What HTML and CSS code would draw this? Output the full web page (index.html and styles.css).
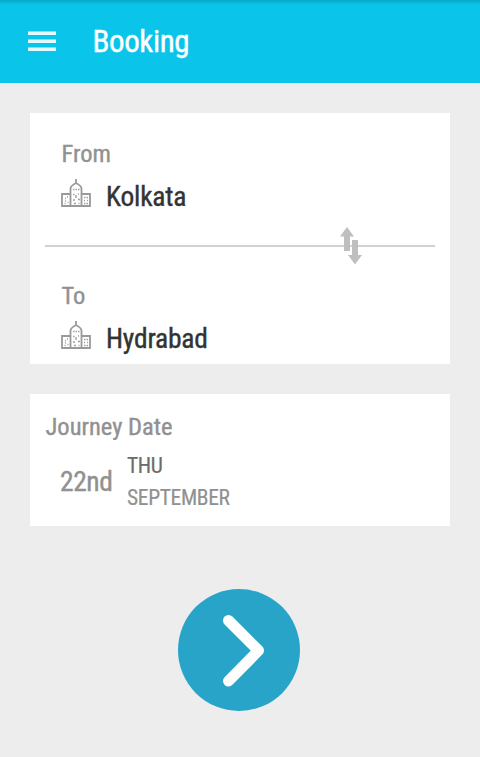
FILE: index.html
```html
<!DOCTYPE html>
<html lang="en">
<head>
    <meta charset="UTF-8">
    <meta name="viewport" content="width=device-width, initial-scale=1.0">
    <title>Booking</title>
    <link rel="stylesheet" href="styles.css">
</head>

<body>
    <!-- building icon, used in both places -->
    <svg class="symbols">
        <symbol id="city" viewBox="0 0 30 28">
            <path class="outline" d="M9.500 27V9.500Q10 6.500 15 4Q20 6.500 20.500 9.500V27M15 0V4M9.500 15H1V27H29V15H20.500"/>
            <path class="windows" d="M12 10.500h1.500M14.500 10.500h1.500M17 10.500h1.500M15 16v3M12 15.500h1.500M17 15h1M12 21h2M17 20.500h2M13 24.500h2M17.500 24.500h1M4 19.500h1M6 18h1M4 22h1M3.500 24.500h1M6.500 23.500h1M23 18.500h1.500M25.500 18.500h1.500M23 21.500h1M26 21.500h1M23 24.500h1.500M25.500 24.500h1.500"/>
        </symbol>
    </svg>

    <header class="topbar">
        <button class="menu" aria-label="Menu">
            <span></span>
            <span></span>
            <span></span>
        </button>
        <h1 class="title">Booking</h1>
    </header>

    <main class="content">
        <section class="card route">
            <div class="place">
                <span class="label">From</span>
                <div class="city">
                    <svg class="city-icon"><use href="#city"/></svg>
                    <span class="city-name">Kolkata</span>
                </div>
            </div>
            <div class="divider">
                <svg class="swap" viewBox="0 0 24 38">
                    <path d="M7 0L14 9.500H10V24H4V9.500H0ZM12 13H18V28H22L15 37.500L8 28H12Z"/>
                </svg>
            </div>
            <div class="place">
                <span class="label">To</span>
                <div class="city">
                    <svg class="city-icon"><use href="#city"/></svg>
                    <span class="city-name">Hydrabad</span>
                </div>
            </div>
        </section>

        <section class="card journey">
            <span class="label">Journey Date</span>
            <div class="date">
                <span class="day">22nd</span>
                <div class="rest">
                    <span class="weekday">THU</span>
                    <span class="month">SEPTEMBER</span>
                </div>
            </div>
        </section>

        <button class="next" aria-label="Next">
            <svg viewBox="0 0 122 122">
                <path d="M50.500 31.500L80.500 61.500L50.500 92"/>
            </svg>
        </button>
    </main>
</body>

</html>
```

FILE: styles.css
```css
* {
    box-sizing: border-box;
}

body {
    margin: 0;
    min-height: 757px;
    background-color: #ededed;
    font-family: "Roboto Condensed", Roboto, sans-serif;
    font-stretch: 75%;
    color: #919191;
}

button {
    border: none;
    padding: 0;
}

.symbols {
    display: none;
}

.topbar {
    display: flex;
    align-items: center;
    height: 83px;
    padding: 0 28px;
    background: linear-gradient(#06a9c9, #0ac4e9 5px);
}

.menu {
    display: flex;
    flex-direction: column;
    gap: 4px;
    width: 28px;
    margin-top: -2px;
    background: none;
}

/* the top border softens the edge of each bar */
.menu span {
    height: 4px;
    border-top: 1px solid #7de1f5;
    background-color: #e0faff;
}

.title {
    margin: 0 0 0 36.5px;
    font-size: 31px;
    font-weight: 400;
    line-height: 36px;
    letter-spacing: -0.4px;
    color: white;
    -webkit-text-stroke: 0.4px white;
}

.content {
    display: flex;
    flex-direction: column;
    padding: 30px;
}

.card {
    background-color: white;
}

.label {
    display: block;
    padding-left: 0.5px;
    font-size: 24.5px;
    line-height: 30px;
    -webkit-text-stroke: 0.4px #919191;
}

.route {
    height: 251px;
    padding: 26px 15px 0;
}

.place {
    padding-left: 16px;
}

.city {
    display: flex;
    align-items: center;
    height: 34px;
    margin-top: 10px;
}

.city-icon {
    width: 30px;
    height: 28px;
    margin: -7px 15px 0 0;
}

.outline {
    fill: none;
    stroke: #999;
    stroke-width: 1.8;
}

.windows {
    fill: none;
    stroke: #a0a0a0;
    stroke-width: 1.4;
}

.city-name {
    margin-top: 2px;
    font-size: 27.5px;
    line-height: 34px;
    letter-spacing: -0.2px;
    color: #333;
    -webkit-text-stroke: 0.4px #333;
}

.divider {
    position: relative;
    height: 2px;
    margin: 32px 0 34px;
    background-color: #d2d2d2;
}

/* sits over the line */
.swap {
    position: absolute;
    top: -18px;
    left: 295px;
    width: 24px;
    height: 38px;
    fill: #bfbfbf;
}

.journey {
    height: 132px;
    margin-top: 30px;
    padding: 18px 15px 0;
}

.date {
    display: flex;
    align-items: center;
    height: 64px;
    margin-top: 8px;
    padding-left: 15px;
}

.day {
    width: 67px;
    margin-top: -2px;
    font-size: 27.5px;
    letter-spacing: -0.4px;
    -webkit-text-stroke: 0.4px #919191;
}

.rest {
    display: flex;
    flex-direction: column;
    font-size: 21.5px;
    line-height: 32px;
    letter-spacing: -0.35px;
    -webkit-text-stroke: 0.2px;
}

.weekday {
    color: #6c6c6c;
}

.next {
    align-self: center;
    width: 122px;
    height: 122px;
    margin: 63px 2px 0 0;
    border-radius: 50%;
    background-color: #28a4c9;
}

.next svg {
    display: block;
    fill: none;
    stroke: white;
    stroke-width: 11;
    stroke-linecap: round;
    stroke-linejoin: round;
}
```
